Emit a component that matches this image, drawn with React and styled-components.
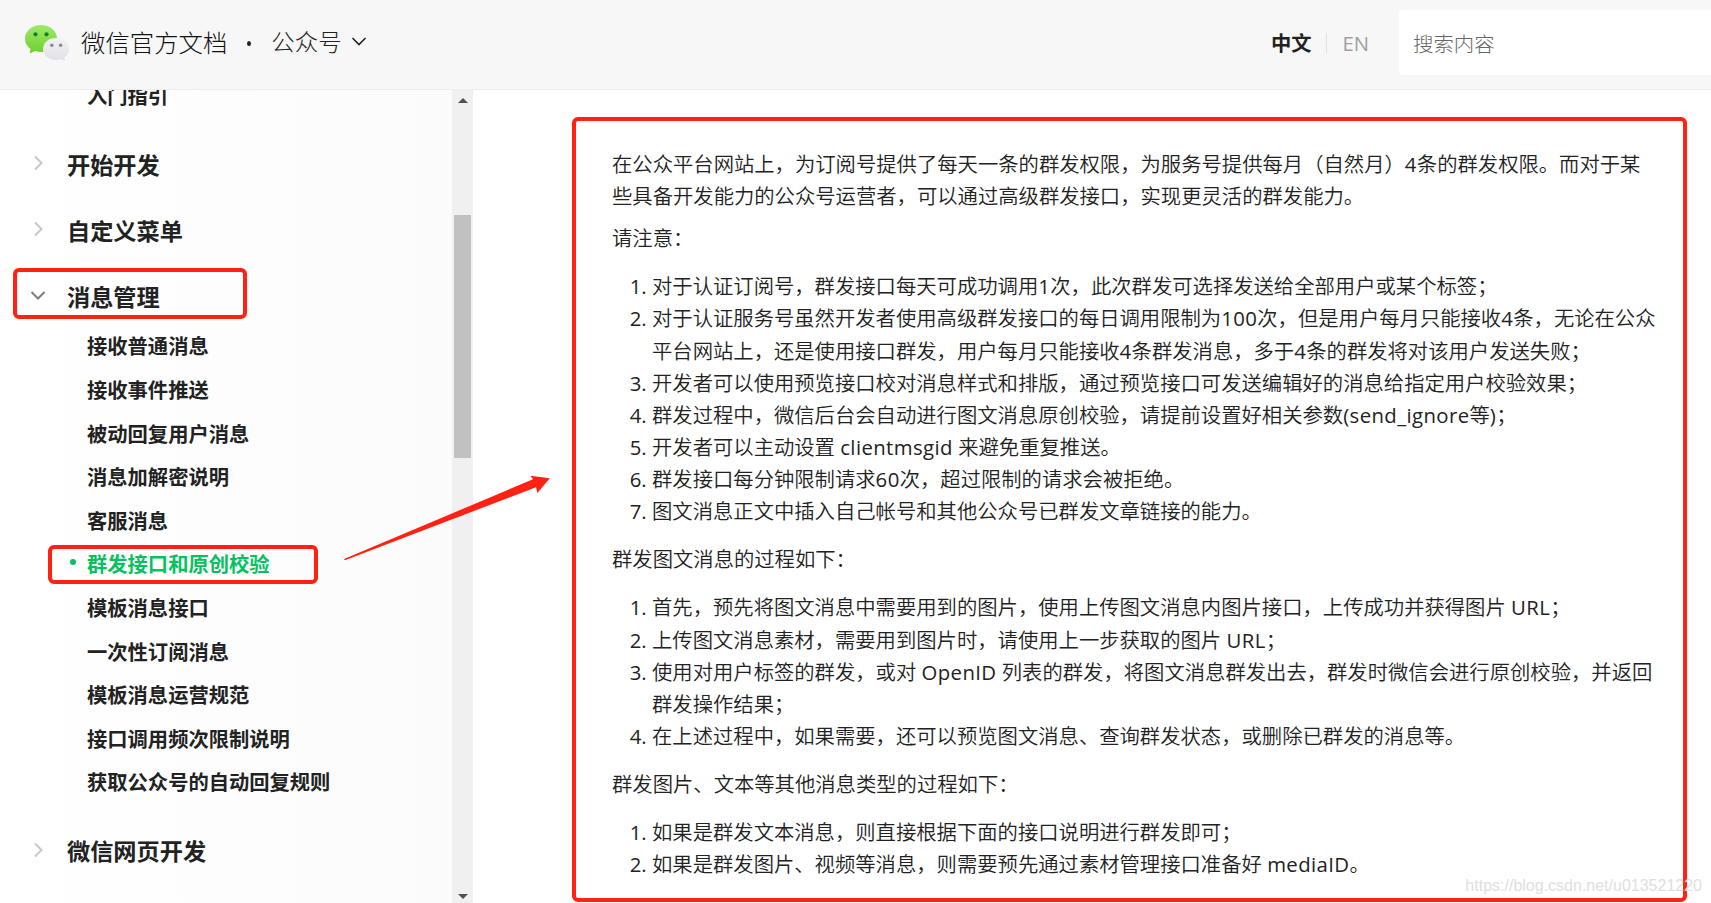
import React from 'react'
import styled, { createGlobalStyle } from 'styled-components'

export default function App() {
  const before = ["开始开发", "自定义菜单"];
  const pages = [
    "接收普通消息",
    "接收事件推送",
    "被动回复用户消息",
    "消息加解密说明",
    "客服消息",
    "群发接口和原创校验",
    "模板消息接口",
    "一次性订阅消息",
    "模板消息运营规范",
    "接口调用频次限制说明",
    "获取公众号的自动回复规则",
  ];
  const intro = [
    "在公众平台网站上，为订阅号提供了每天一条的群发权限，为服务号提供每月（自然月）4条的群发权限。而对于某",
    "些具备开发能力的公众号运营者，可以通过高级群发接口，实现更灵活的群发能力。",
  ];
  const notices = [
    ["对于认证订阅号，群发接口每天可成功调用1次，此次群发可选择发送给全部用户或某个标签；"],
    [
      "对于认证服务号虽然开发者使用高级群发接口的每日调用限制为100次，但是用户每月只能接收4条，无论在公众",
      "平台网站上，还是使用接口群发，用户每月只能接收4条群发消息，多于4条的群发将对该用户发送失败；",
    ],
    ["开发者可以使用预览接口校对消息样式和排版，通过预览接口可发送编辑好的消息给指定用户校验效果；"],
    ["群发过程中，微信后台会自动进行图文消息原创校验，请提前设置好相关参数(send_ignore等)；"],
    ["开发者可以主动设置 clientmsgid 来避免重复推送。"],
    ["群发接口每分钟限制请求60次，超过限制的请求会被拒绝。"],
    ["图文消息正文中插入自己帐号和其他公众号已群发文章链接的能力。"],
  ];
  const articleSteps = [
    ["首先，预先将图文消息中需要用到的图片，使用上传图文消息内图片接口，上传成功并获得图片 URL；"],
    ["上传图文消息素材，需要用到图片时，请使用上一步获取的图片 URL；"],
    [
      "使用对用户标签的群发，或对 OpenID 列表的群发，将图文消息群发出去，群发时微信会进行原创校验，并返回",
      "群发操作结果；",
    ],
    ["在上述过程中，如果需要，还可以预览图文消息、查询群发状态，或删除已群发的消息等。"],
  ];
  const otherSteps = [
    ["如果是群发文本消息，则直接根据下面的接口说明进行群发即可；"],
    ["如果是群发图片、视频等消息，则需要预先通过素材管理接口准备好 mediaID。"],
  ];

  return (
    <Page>
      <GlobalStyle />
      <Header>
        <Logo />
        <Brand>微信官方文档</Brand>
        <Dot />
        <Product>公众号</Product>
        <Chevron down color="#222" stroke={1.6} />
        <Languages>
          <Language $active>中文</Language>
          <Language>EN</Language>
        </Languages>
        <Search placeholder="搜索内容" />
      </Header>
      <Body>
        <Sidebar>
          <Menu>
            <SubMenu>
              <Item>入门指引</Item>
            </SubMenu>
            {before.map((name) => (
              <Group key={name}>
                <Chevron color="#c8c8c8" />
                {name}
              </Group>
            ))}
            <Group>
              <Chevron down color="#7d7d7d" />
              消息管理
              <GroupMark />
            </Group>
            <SubMenu>
              {pages.map((name) => (
                <Item key={name} $active={name === "群发接口和原创校验"}>
                  {name}
                  {name === "群发接口和原创校验" && <ItemMark />}
                </Item>
              ))}
            </SubMenu>
            <Group>
              <Chevron color="#c8c8c8" />
              微信网页开发
            </Group>
          </Menu>
          <ScrollTrack>
            <Arrow />
            <Thumb />
            <Arrow $down />
          </ScrollTrack>
        </Sidebar>
        <Content>
          <Paragraph>
            {intro.map((line) => (
              <Line key={line} text={line} />
            ))}
          </Paragraph>
          <Paragraph>请注意：</Paragraph>
          <Steps items={notices} />
          <Paragraph>群发图文消息的过程如下：</Paragraph>
          <Steps items={articleSteps} />
          <Paragraph>群发图片、文本等其他消息类型的过程如下：</Paragraph>
          <Steps items={otherSteps} />
          <Paragraph>
            <Line text="关于群发时使用is_to_all为true使其进入公众号在微信客户端的历史消息列表的说明：" />
          </Paragraph>
          <ContentMark />
        </Content>
      </Body>
      <Pointer viewBox="0 0 210 90">
        <path d="M2 86 L191 6.300 L188.500 2.700 L207.800 5.300 L195.400 20 L194 14.300 L3 87.200 Z" fill="#ff2113" />
      </Pointer>
      <Watermark>https://blog.csdn.net/u013521220</Watermark>
    </Page>
  );
}

function Steps({ items }) {
  return (
    <List>
      {items.map((lines, i) => (
        <li key={i}>
          {lines.map((line) => (
            <Line key={line} text={line} />
          ))}
        </li>
      ))}
    </List>
  );
}

// latin runs are set a little wider than the chinese text
function Line({ text }) {
  return (
    <div>
      {text.split(/([\w()]+)/).map((part, i) => (
        i % 2 ? <Latin key={i}>{part}</Latin> : part
      ))}
    </div>
  );
}

function Chevron({ down, color, stroke = 2 }) {
  return (
    <ChevronIcon width="16" height="16" viewBox="0 0 16 16">
      <path
        d={down ? "M1.5 5 L8 11.5 L14.5 5" : "M5 1.5 L11.5 8 L5 14.5"}
        fill="none"
        stroke={color}
        strokeWidth={stroke}
      />
    </ChevronIcon>
  );
}

function Logo() {
  return (
    <LogoIcon width="46" height="38" viewBox="0 0 46 38">
      <defs>
        <linearGradient id="green" x1="0" y1="0" x2="0" y2="1">
          <stop offset="0" stopColor="#9eea6a" />
          <stop offset="1" stopColor="#6fd02c" />
        </linearGradient>
        <linearGradient id="grey" x1="0" y1="0" x2="0" y2="1">
          <stop offset="0" stopColor="#f0f2f4" />
          <stop offset="1" stopColor="#dfe1e6" />
        </linearGradient>
      </defs>
      <path
        d="M17 1 C8 1 1 7 1 14.8 C1 19 3 22.4 6.5 25 L5.6 29.5 L11.3 27 C13.2 27.6 15 28 17 28 C26 28 33 22 33 14.5 C33 7 26 1 17 1 Z"
        fill="url(#green)"
      />
      <circle cx="11.5" cy="10.3" r="2.1" fill="#187e28" />
      <circle cx="22.5" cy="10.3" r="2.1" fill="#187e28" />
      <path
        d="M32 14 C24.5 14 19 18.8 19 25 C19 31.2 24.5 36 32 36 C34 36 35.5 35.7 37 35.2 L41 37 L40.3 33.6 C43.5 31.5 45.3 28.5 45.3 25 C45.3 18.8 39.5 14 32 14 Z"
        fill="url(#grey)"
      />
      <circle cx="27.8" cy="21.3" r="1.7" fill="#858b8b" />
      <circle cx="36.6" cy="21.3" r="1.7" fill="#858b8b" />
    </LogoIcon>
  );
}

const GlobalStyle = createGlobalStyle`
  body {
    margin: 0;
    font-family: "Open Sans", "Noto Sans CJK SC", sans-serif;
    color: #222;
    background: white;
  }
`;

const Page = styled.div`
  position: relative;
  display: flex;
  flex-direction: column;
  height: 903px;
  overflow: hidden;
`;

const Header = styled.header`
  display: flex;
  align-items: center;
  flex: none;
  height: 90px;
  padding: 0 0 4px 24px;
  box-sizing: border-box;
  background: #f7f7f7;
  border-bottom: 1px solid #ededed;
`;

const LogoIcon = styled.svg`
  flex: none;
`;

const Brand = styled.h1`
  margin: 0 0 3px 11px;
  font-size: 24.4px;
  font-weight: 300;
  color: #111;
`;

const Dot = styled.span`
  width: 4px;
  height: 5px;
  margin: 1px 20px 0 20px;
  border-radius: 50%;
  background: #222;
`;

const Product = styled.span`
  margin: 0 9px 3px 0;
  font-size: 23.4px;
  font-weight: 300;
`;

const Languages = styled.div`
  display: flex;
  align-items: center;
  margin-left: auto;
`;

const Language = styled.span`
  font-size: 20.3px;
  line-height: 20px;
  color: ${({ $active }) => ($active ? '#222' : '#a0a0a0')};
  font-weight: ${({ $active }) => ($active ? 700 : 400)};
  & + & {
    margin-left: 15px;
    padding-left: 15px;
    border-left: 1px solid #e2e2e2;
  }
`;

const Search = styled.input`
  width: 312px;
  height: 65px;
  margin-left: 30px;
  padding: 2px 14px 0;
  box-sizing: border-box;
  border: none;
  border-radius: 4px 0 0 4px;
  background: white;
  font: 300 20.4px "Open Sans", "Noto Sans CJK SC", sans-serif;
  &::placeholder {
    color: #666;
  }
`;

const Body = styled.div`
  display: flex;
  flex: 1;
  min-height: 0;
`;

const Sidebar = styled.aside`
  display: flex;
  flex: none;
  width: 473px;
  background: linear-gradient(to right, white, #fbfbfb);
`;

const Menu = styled.nav`
  flex: 1;
  margin-top: -17px;
  clip-path: inset(17px 0 0 0);
`;

const Group = styled.div`
  position: relative;
  display: flex;
  align-items: center;
  height: 66px;
  padding-left: 30px;
  font-size: 23.2px;
  font-weight: 700;
`;

const ChevronIcon = styled.svg`
  flex: none;
  margin-bottom: 3px;
  ${Group} & {
    margin: 0 21px 1px 0;
  }
`;

const SubMenu = styled.div`
  margin-bottom: 14px;
  ${Group} + & {
    margin-top: -5px;
  }
`;

const Item = styled.div`
  position: relative;
  display: flex;
  align-items: center;
  height: 43.6px;
  padding-left: 87px;
  font-size: 20.3px;
  font-weight: 700;
  color: ${({ $active }) => ($active ? '#07c160' : '#222')};
  &::before {
    content: '';
    display: ${({ $active }) => ($active ? 'block' : 'none')};
    width: 6px;
    height: 6px;
    margin: 0 11px 2px -17px;
    border-radius: 50%;
    background: #07c160;
  }
`;

const Mark = styled.span`
  position: absolute;
  box-sizing: border-box;
  border: 4px solid #ff2113;
  border-radius: 6px;
`;

const GroupMark = styled(Mark)`
  top: 5px;
  left: 13px;
  width: 234px;
  height: 51px;
`;

const ItemMark = styled(Mark)`
  top: 3px;
  left: 48px;
  width: 270px;
  height: 39px;
`;

const ScrollTrack = styled.div`
  display: flex;
  flex-direction: column;
  align-items: center;
  justify-content: space-between;
  width: 21px;
  padding: 8px 0 4px;
  box-sizing: border-box;
  background: #f0f0f0;
`;

const Arrow = styled.i`
  border: 5px solid transparent;
  border-top: ${({ $down }) => ($down ? '5px solid #505050' : 'none')};
  border-bottom: ${({ $down }) => ($down ? 'none' : '5px solid #505050')};
`;

const Thumb = styled.div`
  width: 17px;
  height: 243px;
  margin-bottom: 325px;
  background: #c1c1c1;
`;

const Content = styled.main`
  position: relative;
  flex: 1;
  padding: 58px 0 0 139px;
  font-size: 20.33px;
  font-weight: 350;
  line-height: 32.05px;
  white-space: nowrap;
`;

const Paragraph = styled.div`
  margin-bottom: 10px;
`;

const List = styled.ol`
  margin: 16.3px 0;
  padding-left: 40px;
  li::marker {
    font-weight: 400;
  }
`;

const Latin = styled.span`
  font-weight: 400;
  letter-spacing: 0.4px;
`;

const ContentMark = styled(Mark)`
  top: 27px;
  left: 99px;
  width: 1115px;
  height: 785px;
`;

const Pointer = styled.svg`
  position: absolute;
  top: 473px;
  left: 342px;
  width: 210px;
  height: 90px;
`;

const Watermark = styled.div`
  position: absolute;
  right: 9px;
  bottom: 8px;
  font: 16px "Liberation Sans", sans-serif;
  color: #e0e0e0;
`;
